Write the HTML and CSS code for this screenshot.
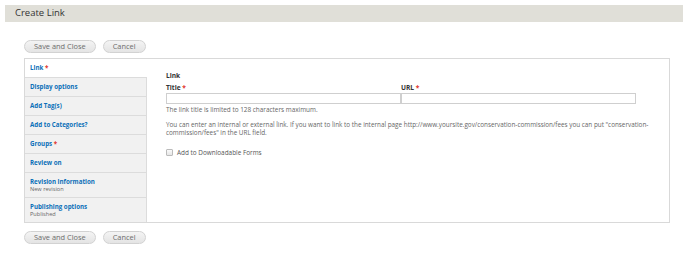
FILE: index.html
```html
<!DOCTYPE html>
<html>
<head>
<meta charset="utf-8">
<link rel="stylesheet" href="styles.css">
</head>
<body>
<div class="page-title">Create Link</div>
<div class="actions top">
  <button class="btn">Save and Close</button>
  <button class="btn">Cancel</button>
</div>
<div class="vtabs">
  <ul class="vtab-menu">
    <li class="vtab selected"><a>Link <span class="req">*</span></a></li>
    <li class="vtab"><a>Display options</a></li>
    <li class="vtab"><a>Add Tag(s)</a></li>
    <li class="vtab"><a>Add to Categories?</a></li>
    <li class="vtab"><a>Groups <span class="req">*</span></a></li>
    <li class="vtab"><a>Review on</a></li>
    <li class="vtab two"><a>Revision information</a><span class="summary">New revision</span></li>
    <li class="vtab two last"><a>Publishing options</a><span class="summary">Published</span></li>
  </ul>
  <div class="vtab-pane">
    <div class="field-title">Link</div>
    <div class="link-row">
      <div class="link-col">
        <label class="lbl">Title <span class="req">*</span></label>
        <input class="text" type="text">
      </div>
      <div class="link-col">
        <label class="lbl">URL <span class="req">*</span></label>
        <input class="text" type="text">
      </div>
    </div>
    <div class="help">The link title is limited to 128 characters maximum.</div>
    <div class="desc">You can enter an internal or external link. If you want to link to the internal page http://www.yoursite.gov/conservation&#8209;commission/fees you can put "conservation&#8209;<br>commission/fees" in the URL field.</div>
    <label class="check"><span class="box"></span>Add to Downloadable Forms</label>
  </div>
</div>
<div class="actions bottom">
  <button class="btn">Save and Close</button>
  <button class="btn">Cancel</button>
</div>
</body>
</html>
```
FILE: styles.css
```css
html, body {
  margin: 0;
  padding: 0;
  background: #fff;
  font-family: "Open Sans", "Liberation Sans", sans-serif;
  color: #333;
}
.page-title {
  margin: 5px 4px 0 5px;
  height: 17px;
  line-height: 16px;
  padding-left: 10px;
  background: #e0dfd8;
  font-size: 9.5px;
  color: #333;
}
.actions {
  display: flex;
  gap: 7px;
  margin-left: 24px;
}
.actions.top { margin-top: 18px; margin-bottom: 5px; }
.actions.bottom { margin-top: 8px; }
.btn {
  height: 13px;
  padding: 0 9px;
  border: 1px solid #d2d2d2;
  border-radius: 7px;
  background: linear-gradient(#f4f4f4, #e4e4e4);
  font-family: inherit;
  font-size: 7.4px;
  color: #6d6d6d;
  line-height: 11px;
  margin: 0;
}
.vtabs {
  display: flex;
  margin-left: 24px;
  width: 644px;
  border: 1px solid #d9d9d9;
}
.vtab-menu {
  list-style: none;
  margin: 0;
  padding: 0;
  width: 121px;
  background: #f1f1f1;
  border-right: 1px solid #dcdcdc;
}
.vtab {
  padding: 4px 6px 5px 5px;
  border-bottom: 1px solid #dcdcdc;
  line-height: 9px;
  font-size: 6.2px;
  font-weight: bold;
}
.vtab.selected {
  background: #fff;
  margin-right: -1px;
}
.vtab.two { padding: 5px 6px 4px 5px; line-height: 8px; }
.vtab.last { border-bottom: none; }
.vtab a { color: #0a6fb8; display: block; }
.summary {
  display: block;
  font-weight: normal;
  font-size: 5.6px;
  line-height: 7px;
  color: #666;
}
.req { color: #e0312a; }
.vtab-pane {
  flex: 1;
  min-width: 0;
  padding: 12px 10px 0 19px;
}
.field-title {
  font-size: 6.6px;
  font-weight: bold;
  line-height: 9px;
  margin-bottom: 3px;
}
.link-row {
  display: flex;
  width: 470px;
}
.link-col {
  display: flex;
  flex-direction: column;
  flex: 1;
}
.lbl {
  font-size: 6.6px;
  font-weight: bold;
  line-height: 9px;
  margin-bottom: 1px;
}
.text {
  box-sizing: border-box;
  height: 11px;
  width: 100%;
  margin: 0;
  padding: 0;
  border: 1px solid #cfcfcf;
  background: #fff;
}
.help {
  margin-top: 2px;
  font-size: 6.4px;
  line-height: 8px;
  color: #666;
}
.desc {
  margin-top: 7px;
  font-size: 6.35px;
  line-height: 7.5px;
  color: #666;
  white-space: nowrap;
}
.check {
  display: flex;
  align-items: center;
  gap: 4px;
  margin-top: 12px;
  font-size: 6.4px;
  color: #555;
}
.box {
  width: 5px;
  height: 5px;
  border: 1px solid #bbb;
  border-radius: 1px;
  background: linear-gradient(#fafafa, #e6e6e6);
}
```
